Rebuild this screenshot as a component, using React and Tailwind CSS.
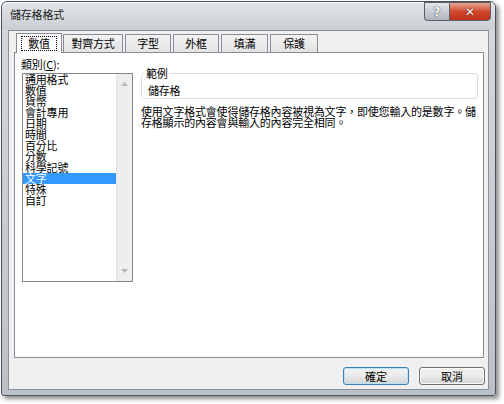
const CATEGORIAS = ['通用格式', '數值', '貨幣', '會計專用', '日期', '時間', '百分比', '分數', '科學記號', '文字', '特殊', '自訂'];
const TABS = [
  { nombre: '數值', w: 'w-[46px]' },
  { nombre: '對齊方式', w: 'w-[60px]' },
  { nombre: '字型', w: 'w-[46px]' },
  { nombre: '外框', w: 'w-[46px]' },
  { nombre: '填滿', w: 'w-[47px]' },
  { nombre: '保護', w: 'w-[48px]' },
];

const fuente = { fontFamily: '"Noto Sans CJK TC", "Noto Sans", sans-serif' };

function TituloBoton({ children, className }) {
  return (
    <div className={`h-[19px] flex items-center justify-center border border-[#5b6068] ${className}`}>
      {children}
    </div>
  );
}

function Boton({ children, principal }) {
  const borde = principal
    ? 'border-[#3c7fb1] shadow-[inset_0_0_0_1px_#b9e3f9]'
    : 'border-[#707070] shadow-[inset_0_0_0_1px_#fbfbfb]';
  return (
    <div className={`w-[66px] h-[18px] rounded-[3px] border flex items-center justify-center text-[11px] leading-none bg-gradient-to-b from-[#f2f2f2] via-[#ebebeb] to-[#d4d4d4] ${borde}`}>
      {children}
    </div>
  );
}

export default function App() {
  return (
    <div className="w-[504px] h-[404px] bg-white pl-[1px] pt-[1px] text-black" style={fuente}>
      <div className="w-[495px] h-[395px] flex flex-col rounded-t-[6px] rounded-b-[3px] border border-[#4d5158] bg-gradient-to-b from-[#d6dade] to-[#bcc1c8] shadow-[3px_3px_4px_rgba(0,0,0,0.45)]">
        {/* barra de título */}
        <div className="h-[28px] flex items-start pl-[8px] pr-[4px] rounded-t-[6px] bg-gradient-to-b from-[#e2e5e9] to-[#cacfd5] shadow-[inset_0_1px_0_#f6f7f9]">
          <div className="mt-[6px] text-[11px] leading-[12px] tracking-[-0.2px] text-[#1c1c1c]">儲存格格式</div>
          <div className="ml-auto flex">
            <TituloBoton className="w-[25px] rounded-bl-[4px] border-r-0 bg-gradient-to-b from-[#e2e5e9] via-[#c9ced5] to-[#aeb5be]">
              <span className="text-[12px] font-bold leading-none text-white [text-shadow:0_0_1px_#333,0_0_1px_#333]" style={{ fontFamily: '"DejaVu Sans", sans-serif' }}>?</span>
            </TituloBoton>
            <TituloBoton className="w-[42px] rounded-br-[4px] bg-gradient-to-b from-[#e8a493] via-[#d0472d] to-[#c1321b]">
              <span className="text-[12px] font-bold leading-none text-white [text-shadow:0_0_1px_#4a0f05,0_0_1px_#4a0f05]" style={{ fontFamily: '"DejaVu Sans", sans-serif' }}>✕</span>
            </TituloBoton>
          </div>
        </div>

        {/* área del cliente */}
        <div className="mx-[6px] h-[360px] flex flex-col border border-[#8a9099] bg-[#f0f0f0]">
          {/* pestañas */}
          <div className="h-[21px] flex items-end pl-[7px] gap-[2px]">
            {TABS.map((tab, i) => (
              <div
                key={tab.nombre}
                className={`${tab.w} flex items-center justify-center border border-b-0 border-[#898c95] text-[11px] leading-none tracking-[-0.2px] ${
                  i === 0
                    ? 'h-[20px] bg-white relative top-[1px] z-10 -mr-[1px]'
                    : 'h-[18px] bg-gradient-to-b from-[#f3f3f3] to-[#e3e3e3]'
                }`}
              >
                {i === 0 ? (
                  <span className="border border-dotted border-black px-[6px] py-[1px]">{tab.nombre}</span>
                ) : (
                  tab.nombre
                )}
              </div>
            ))}
          </div>

          {/* panel */}
          <div className="ml-[5px] w-[470px] h-[306px] border border-[#898c95] bg-white flex text-[11px] tracking-[-0.2px]">
            <div className="ml-[7px] mt-[5px] flex flex-col">
              <div className="leading-[12px] ml-[-1px]">
                類別(<span className="underline">C</span>):
              </div>
              <div className="mt-[3px] w-[111px] h-[209px] border border-[#828790] flex">
                <div className="flex-1 flex flex-col">
                  {CATEGORIAS.map((cat, i) => (
                    <div key={cat} className={`h-[11px] leading-[11px] pl-[2px] ${i === 9 ? 'bg-[#3399ff] text-white' : ''}`}>
                      {cat}
                    </div>
                  ))}
                </div>
                <div className="w-[16px] bg-[#eeeeee] border-l border-[#e4e4e4] flex flex-col items-center justify-between py-[8px]">
                  <svg width="7" height="4" viewBox="0 0 7 4"><path d="M0 4 L3.5 0 L7 4 Z" fill="#b8b8b8" /></svg>
                  <svg width="7" height="4" viewBox="0 0 7 4"><path d="M0 0 L3.5 4 L7 0 Z" fill="#b8b8b8" /></svg>
                </div>
              </div>
            </div>

            <div className="ml-[8px] mt-[20px] flex flex-col">
              <div className="relative w-[337px] h-[26px] border border-[#d5dfe5] rounded-[3px]">
                <span className="absolute left-[3px] top-[-7px] bg-white px-[1px] leading-[12px]">範例</span>
                <div className="pl-[6px] pt-[10px] leading-[12px]">儲存格</div>
              </div>
              <div className="mt-[7px] leading-[11px] whitespace-nowrap">
                <div>使用文字格式會使得儲存格內容被視為文字，即使您輸入的是數字。儲</div>
                <div>存格顯示的內容會與輸入的內容完全相同。</div>
              </div>
            </div>
          </div>

          {/* botones */}
          <div className="mt-[9px] flex justify-end gap-[10px] pr-[3px]">
            <Boton principal>確定</Boton>
            <Boton>取消</Boton>
          </div>
        </div>
      </div>
    </div>
  );
}
